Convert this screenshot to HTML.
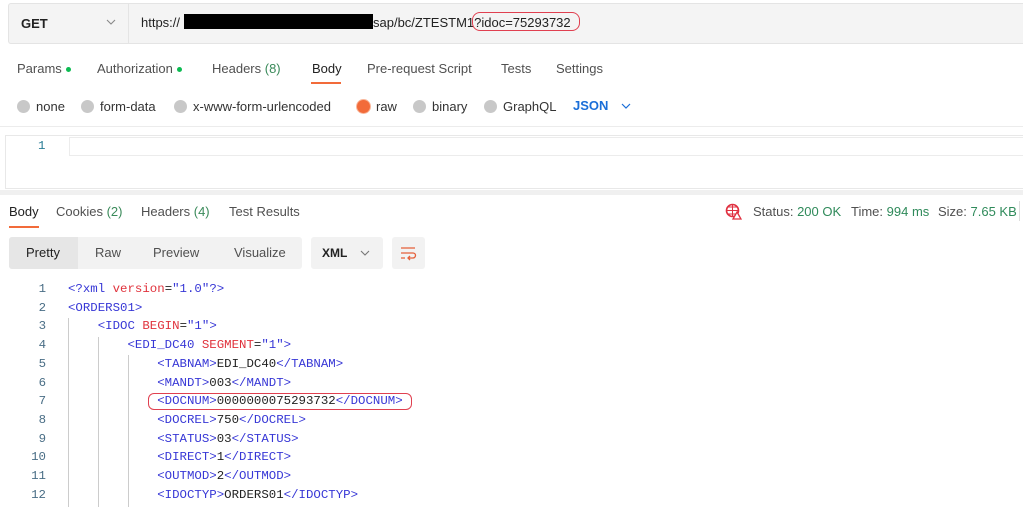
<!DOCTYPE html>
<html><head><meta charset="utf-8"><style>
body{margin:0;width:1023px;height:507px;overflow:hidden;background:#fff;font-family:"Liberation Sans",sans-serif;font-size:13px;color:#505050;position:relative}
.a{position:absolute;white-space:nowrap}
.dot{display:inline-block;width:5px;height:5px;border-radius:50%;background:#0cbb52;margin-left:4px;vertical-align:middle}
.r{display:inline-block;width:13px;height:13px;border-radius:50%;background:#c8c8c8;vertical-align:-2px;margin-right:6px}
.code{font-family:"Liberation Mono",monospace;font-size:12.4px;line-height:18.7px}
.t{color:#3737d6}.at{color:#e0323c}.v{color:#3737d6}.tx{color:#222}
.ln{color:#4a6e86;text-align:right;width:46px}
</style></head><body>
<div class="a" style="left:8px;top:3px;width:1015px;height:39px;background:#f4f4f4;border:1px solid #e4e4e4;border-right:none;border-radius:3px 0 0 3px"></div>
<div class="a" style="left:128px;top:4px;width:1px;height:39px;background:#e4e4e4"></div>
<div class="a" style="left:21px;top:16px;font-weight:bold;color:#222">GET</div>
<svg class="a" style="left:106px;top:19px" width="10" height="6" viewBox="0 0 10 6"><path d="M1 1l4 4 4-4" fill="none" stroke="#888" stroke-width="1.1"/></svg>
<div class="a" style="left:141px;top:15px;color:#222">https://</div>
<div class="a" style="left:184px;top:14px;width:189px;height:15px;background:#000"></div>
<div class="a" style="left:373px;top:15px;color:#222">sap/bc/ZTESTM1?idoc=75293732</div>
<div class="a" style="left:472px;top:12px;width:106px;height:17px;border:1px solid #e04050;border-radius:8px"></div>

<div class="a" style="left:17px;top:61px">Params<span class="dot"></span></div>
<div class="a" style="left:97px;top:61px">Authorization<span class="dot"></span></div>
<div class="a" style="left:212px;top:61px">Headers <span style="color:#3a8a5a">(8)</span></div>
<div class="a" style="left:312px;top:61px;color:#222">Body</div>
<div class="a" style="left:311px;top:82px;width:30px;height:2px;background:#f26b3a"></div>
<div class="a" style="left:367px;top:61px">Pre-request Script</div>
<div class="a" style="left:501px;top:61px">Tests</div>
<div class="a" style="left:556px;top:61px">Settings</div>

<div class="a" style="left:17px;top:99px;color:#333"><span class="r"></span>none</div>
<div class="a" style="left:81px;top:99px;color:#333"><span class="r"></span>form-data</div>
<div class="a" style="left:174px;top:99px;color:#333"><span class="r"></span>x-www-form-urlencoded</div>
<div class="a" style="left:357px;top:99px;color:#333"><span class="r" style="background:#f26b3a;box-shadow:0 0 0 1px #f9b69a"></span>raw</div>
<div class="a" style="left:413px;top:99px;color:#333"><span class="r"></span>binary</div>
<div class="a" style="left:484px;top:99px;color:#333"><span class="r"></span>GraphQL</div>
<div class="a" style="left:573px;top:98px;color:#1a6ed8;font-weight:bold">JSON</div>
<svg class="a" style="left:621px;top:103px" width="10" height="6" viewBox="0 0 10 6"><path d="M1 1l4 4 4-4" fill="none" stroke="#1a6ed8" stroke-width="1.2"/></svg>

<div class="a" style="left:0;top:126px;width:1023px;height:1px;background:#ececec"></div>
<div class="a" style="left:5px;top:135px;width:1018px;height:52px;border:1px solid #e8e8e8;border-right:none"></div>
<div class="a" style="left:69px;top:137px;width:954px;height:17px;border:1px solid #ececec;border-right:none"></div>
<div class="a code" style="left:38px;top:137px;color:#2a7d96">1</div>
<div class="a" style="left:0;top:190px;width:1023px;height:5px;background:#f0f0f0"></div>

<div class="a" style="left:9px;top:204px;color:#222">Body</div>
<div class="a" style="left:9px;top:226px;width:30px;height:2px;background:#f26b3a"></div>
<div class="a" style="left:56px;top:204px">Cookies <span style="color:#3a8a5a">(2)</span></div>
<div class="a" style="left:141px;top:204px">Headers <span style="color:#3a8a5a">(4)</span></div>
<div class="a" style="left:229px;top:204px">Test Results</div>
<svg class="a" style="left:725px;top:203px" width="17" height="17" viewBox="0 0 17 17"><circle cx="7.5" cy="7.5" r="6" fill="none" stroke="#e03040" stroke-width="1.6"/><path d="M1.5 7.5h12M7.5 1.5v12M3 4h9M3 11h9" stroke="#e03040" stroke-width="1"/><path d="M12 9l4 7h-8z" fill="#fff" stroke="#e03040" stroke-width="1.3"/></svg>
<div class="a" style="left:753px;top:204px">Status: <span style="color:#2f8a5a">200 OK</span></div>
<div class="a" style="left:851px;top:204px">Time: <span style="color:#2f8a5a">994 ms</span></div>
<div class="a" style="left:938px;top:204px">Size: <span style="color:#2f8a5a">7.65 KB</span></div>
<div class="a" style="left:1019px;top:201px;width:1px;height:20px;background:#ddd"></div>

<div class="a" style="left:9px;top:237px;width:293px;height:32px;background:#f2f2f2;border-radius:3px"></div>
<div class="a" style="left:9px;top:237px;width:69px;height:32px;background:#e6e6e6;border-radius:3px 0 0 3px"></div>
<div class="a" style="left:26px;top:245px;color:#222">Pretty</div>
<div class="a" style="left:95px;top:245px">Raw</div>
<div class="a" style="left:153px;top:245px">Preview</div>
<div class="a" style="left:234px;top:245px">Visualize</div>
<div class="a" style="left:311px;top:237px;width:72px;height:32px;background:#f2f2f2;border-radius:3px"></div>
<div class="a" style="left:322px;top:246px;color:#222;font-weight:bold;font-size:12px">XML</div>
<svg class="a" style="left:360px;top:250px" width="10" height="6" viewBox="0 0 10 6"><path d="M1 1l4 4 4-4" fill="none" stroke="#777" stroke-width="1.1"/></svg>
<div class="a" style="left:392px;top:237px;width:33px;height:32px;background:#f2f2f2;border-radius:3px"></div>
<svg class="a" style="left:400px;top:245px" width="17" height="16" viewBox="0 0 17 16"><path d="M1 3h14M1 8h12a2.5 2.5 0 0 1 0 5H8M10 11l-2 2 2 2M1 13h4" fill="none" stroke="#e5603a" stroke-width="1.3"/></svg>

<div class="a code" style="left:0;top:280px">
<div class="ln">1</div><div class="ln">2</div><div class="ln">3</div><div class="ln">4</div><div class="ln">5</div><div class="ln">6</div><div class="ln">7</div><div class="ln">8</div><div class="ln">9</div><div class="ln">10</div><div class="ln">11</div><div class="ln">12</div></div>
<div class="a" style="left:68px;top:318px;width:1px;height:189px;background:#ccc"></div>
<div class="a" style="left:98px;top:337px;width:1px;height:170px;background:#ccc"></div>
<div class="a" style="left:128px;top:355px;width:1px;height:152px;background:#ccc"></div>
<div class="a code" style="left:68px;top:280px;white-space:pre"><span class="t">&lt;?xml</span> <span class="at">version</span><span class="tx">=</span><span class="v">"1.0"</span><span class="t">?&gt;</span>
<span class="t">&lt;ORDERS01&gt;</span>
    <span class="t">&lt;IDOC</span> <span class="at">BEGIN</span><span class="tx">=</span><span class="v">"1"</span><span class="t">&gt;</span>
        <span class="t">&lt;EDI_DC40</span> <span class="at">SEGMENT</span><span class="tx">=</span><span class="v">"1"</span><span class="t">&gt;</span>
            <span class="t">&lt;TABNAM&gt;</span><span class="tx">EDI_DC40</span><span class="t">&lt;/TABNAM&gt;</span>
            <span class="t">&lt;MANDT&gt;</span><span class="tx">003</span><span class="t">&lt;/MANDT&gt;</span>
            <span class="t">&lt;DOCNUM&gt;</span><span class="tx">0000000075293732</span><span class="t">&lt;/DOCNUM&gt;</span>
            <span class="t">&lt;DOCREL&gt;</span><span class="tx">750</span><span class="t">&lt;/DOCREL&gt;</span>
            <span class="t">&lt;STATUS&gt;</span><span class="tx">03</span><span class="t">&lt;/STATUS&gt;</span>
            <span class="t">&lt;DIRECT&gt;</span><span class="tx">1</span><span class="t">&lt;/DIRECT&gt;</span>
            <span class="t">&lt;OUTMOD&gt;</span><span class="tx">2</span><span class="t">&lt;/OUTMOD&gt;</span>
            <span class="t">&lt;IDOCTYP&gt;</span><span class="tx">ORDERS01</span><span class="t">&lt;/IDOCTYP&gt;</span></div>
<div class="a" style="left:148px;top:393px;width:262px;height:15px;border:1px solid #e04050;border-radius:6px"></div>
</body></html>
